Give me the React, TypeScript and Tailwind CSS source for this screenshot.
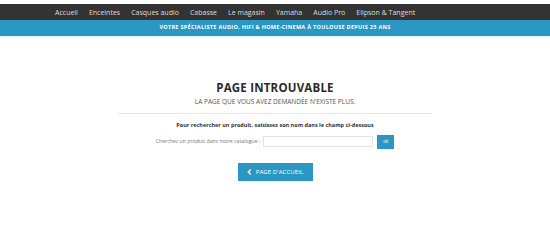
import React from 'react';

const NAV = ['Accueil', 'Enceintes', 'Casques audio', 'Cabasse', 'Le magasin', 'Yamaha', 'Audio Pro', 'Elipson & Tangent'];

export default function App() {
  return (
    <div className="w-[550px] h-[240px] bg-white overflow-hidden" style={{ fontFamily: '"Open Sans", "Liberation Sans", sans-serif' }}>
      <div className="h-[4px] bg-white" />
      <nav className="h-[16px] bg-[#333333] flex items-center pl-[55px] gap-[11px]">
        {NAV.map(n => (
          <span key={n} className="text-[7px] font-normal text-[#dcdcdc] leading-none whitespace-nowrap">{n}</span>
        ))}
      </nav>
      <div className="h-[16px] bg-[#2a98c2] flex items-center justify-center">
        <span className="text-[5.5px] font-bold text-white tracking-[0.3px] leading-none">VOTRE SPÉCIALISTE AUDIO, HIFI &amp; HOME-CINEMA À TOULOUSE DEPUIS 25 ANS</span>
      </div>
      <div className="h-[2px] bg-[#eaf5fa]" />

      <div className="flex flex-col items-center pt-[44px]">
        <h1 className="text-[11.5px] font-bold text-[#2b2b2b] leading-none tracking-[0.2px]">PAGE INTROUVABLE</h1>
        <p className="mt-[5px] text-[6.5px] text-[#555] leading-none">LA PAGE QUE VOUS AVEZ DEMANDÉE N'EXISTE PLUS.</p>
        <div className="mt-[8px] w-[314px] h-px bg-[#e6e6e6]" />
        <p className="mt-[9px] text-[5.5px] font-bold text-[#333] leading-none">Pour rechercher un produit, saisissez son nom dans le champ ci-dessous</p>
        <div className="mt-[6px] flex items-center ml-[0px]">
          <span className="text-[5.2px] text-[#777] leading-none mr-[3px]">Cherchez un produit dans notre catalogue :</span>
          <div className="w-[110px] h-[11px] border border-[#e3e3e3] bg-white" />
          <button className="ml-[4px] w-[17px] h-[14px] bg-[#2a98c2] text-white text-[4.5px] leading-none flex items-center justify-center">ok</button>
        </div>
        <button className="mt-[14px] w-[75px] h-[18px] bg-[#2a98c2] text-white flex items-center justify-center gap-[4px]">
          <svg width="5" height="6" viewBox="0 0 5 6"><path d="M3.8 0.6 L1.3 3 L3.8 5.4" stroke="white" strokeWidth="1.4" fill="none" /></svg>
          <span className="text-[6px] leading-none tracking-[0.1px]">PAGE D'ACCUEIL</span>
        </button>
      </div>
    </div>
  );
}
